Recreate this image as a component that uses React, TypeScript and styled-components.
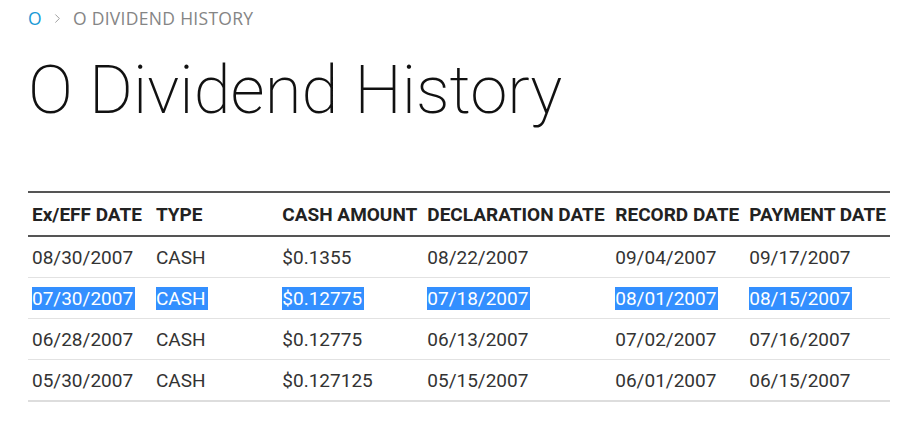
import React from "react";
import styled, { createGlobalStyle } from "styled-components";
import { ChevronRight } from "lucide-react";

const GlobalStyle = createGlobalStyle`
  body {
    margin: 0;
    background: #fff;
  }
`;

const Page = styled.div`
  padding: 6px 28px 0 28px;
  width: 918px;
  box-sizing: border-box;
`;

const Crumbs = styled.nav`
  display: flex;
  align-items: center;
  gap: 8px;
  font-family: "Open Sans", sans-serif;
  font-size: 17.5px;
  color: #858585;
  letter-spacing: 0.3px;
  height: 24px;
  svg {
    color: #999;
  }
`;

const CrumbLink = styled.span`
  color: #1a9ad6;
`;

const Title = styled.h1`
  font-family: Roboto, sans-serif;
  font-weight: 200;
  font-size: 67px;
  color: #111;
  margin: 20px 0 0 0;
  line-height: 80px;
`;

const Table = styled.table`
  margin-top: 61px;
  width: 862px;
  border-collapse: collapse;
  font-family: Roboto, sans-serif;
  border-top: 2px solid #555;
  border-bottom: 2px solid #ddd;
`;

const Th = styled.th`
  text-align: left;
  font-weight: 700;
  font-size: 19px;
  color: #222;
  padding: 0 4px;
  height: 42px;
  border-bottom: 2px solid #555;
  white-space: nowrap;
`;

const Td = styled.td`
  font-size: 19px;
  color: #333;
  padding: 0 4px;
  height: 40px;
  border-top: 1px solid #e2e2e2;
  white-space: nowrap;
`;

const Sel = styled.span<{ $on: boolean }>`
  background: ${(p) => (p.$on ? "#338fff" : "transparent")};
  color: ${(p) => (p.$on ? "#fff" : "inherit")};
  padding-right: ${(p) => (p.$on ? "2px" : "0")};
`;

const cols = [
  { label: "Ex/EFF DATE", width: 124 },
  { label: "TYPE", width: 127 },
  { label: "CASH AMOUNT", width: 145 },
  { label: "DECLARATION DATE", width: 188 },
  { label: "RECORD DATE", width: 134 },
  { label: "PAYMENT DATE", width: 144 },
];

const rows = [
  ["08/30/2007", "CASH", "$0.1355", "08/22/2007", "09/04/2007", "09/17/2007"],
  ["07/30/2007", "CASH", "$0.12775", "07/18/2007", "08/01/2007", "08/15/2007"],
  ["06/28/2007", "CASH", "$0.12775", "06/13/2007", "07/02/2007", "07/16/2007"],
  ["05/30/2007", "CASH", "$0.127125", "05/15/2007", "06/01/2007", "06/15/2007"],
];

export default function App() {
  return (
    <>
      <GlobalStyle />
      <Page>
        <Crumbs>
          <CrumbLink>O</CrumbLink>
          <ChevronRight size={15} strokeWidth={1.5} />
          <span>O DIVIDEND HISTORY</span>
        </Crumbs>
        <Title>O Dividend History</Title>
        <Table>
          <colgroup>
            {cols.map((c) => (
              <col key={c.label} style={{ width: c.width }} />
            ))}
          </colgroup>
          <thead>
            <tr>
              {cols.map((c) => (
                <Th key={c.label}>{c.label}</Th>
              ))}
            </tr>
          </thead>
          <tbody>
            {rows.map((r, i) => (
              <tr key={i}>
                {r.map((v, j) => (
                  <Td key={j}>
                    <Sel $on={i === 1}>{v}</Sel>
                  </Td>
                ))}
              </tr>
            ))}
          </tbody>
        </Table>
      </Page>
    </>
  );
}
